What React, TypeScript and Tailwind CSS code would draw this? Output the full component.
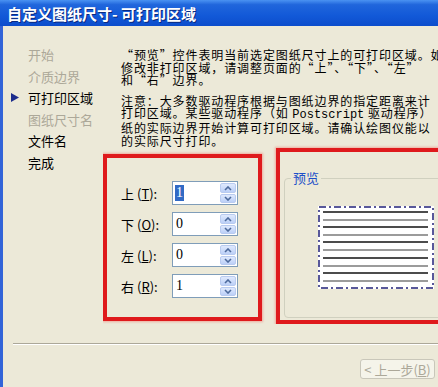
import React from "react";

const cjk = { fontFamily: '"Noto Sans CJK SC", "Liberation Sans", sans-serif' };

const navItems = [
  { label: "开始", state: "off" },
  { label: "介质边界", state: "off" },
  { label: "可打印区域", state: "current" },
  { label: "图纸尺寸名", state: "off" },
  { label: "文件名", state: "on" },
  { label: "完成", state: "on" },
];

const fields = [
  { name: "上", key: "T", value: "1", selected: true },
  { name: "下", key: "O", value: "0" },
  { name: "左", key: "L", value: "0" },
  { name: "右", key: "R", value: "1" },
];

const Spin = () => (
  <div className="flex flex-col w-[17px] h-full gap-[1px] py-[1px] pr-[1px]">
    {[0, 1].map((i) => (
      <div
        key={i}
        className="flex-1 rounded-[2px] border border-[#b9cbf0] bg-[linear-gradient(180deg,#dfe9fd,#bcd0f7)] flex items-center justify-center"
      >
        <svg width="8" height="5" viewBox="0 0 8 5">
          <path
            d={i === 0 ? "M1 4 L4 1 L7 4" : "M1 1 L4 4 L7 1"}
            stroke="#4d6a9c"
            strokeWidth="1.6"
            fill="none"
          />
        </svg>
      </div>
    ))}
  </div>
);

const Paper = () => {
  const ys = [6, 14, 21, 29, 36, 44, 52, 60, 67, 75];
  return (
    <svg width="116" height="83" viewBox="0 0 116 83">
      <rect x="0" y="0" width="116" height="83" fill="#ffffff" />
      <rect
        x="1"
        y="1"
        width="114"
        height="81"
        fill="none"
        stroke="#22227a"
        strokeWidth="1.5"
        strokeDasharray="7 3 2 3"
      />
      {ys.map((y, i) => (
        <line
          key={y}
          x1="5"
          x2="110"
          y1={y}
          y2={y}
          stroke={i % 2 === 0 ? "#111111" : "#7a7a7a"}
          strokeWidth="1.3"
        />
      ))}
    </svg>
  );
};

export default function App() {
  return (
    <div
      className="w-[438px] h-[387px] overflow-hidden bg-[#ece9d8] flex flex-col"
      style={cjk}
    >
      {/* title bar */}
      <div className="h-[26px] shrink-0 flex items-center pl-[7px] bg-[linear-gradient(180deg,#4a92f2_0%,#2066dc_18%,#1259d8_60%,#0c4dcc_100%)]">
        <span className="text-white font-bold text-[15px] leading-none whitespace-nowrap [text-shadow:1px_1px_#0b2a80]">
          自定义图纸尺寸- 可打印区域
        </span>
      </div>

      <div className="flex-1 flex flex-col border-l-[3px] border-[#3264d8] min-h-0">
        <div className="flex">
          {/* wizard steps */}
          <div className="w-[100px] shrink-0 pt-[18px] text-[13px]">
            {navItems.map((n) => (
              <div key={n.label} className="h-[21.5px] flex items-center pl-[8px]">
                <div className="w-[17px] flex items-center">
                  {n.state === "current" && (
                    <svg width="8" height="9" viewBox="0 0 8 9">
                      <path d="M0 0 L8 4.5 L0 9 Z" fill="#1c2c8c" />
                    </svg>
                  )}
                </div>
                <span
                  className={
                    "whitespace-nowrap " +
                    (n.state === "off" ? "text-[#aca899]" : "text-black")
                  }
                >
                  {n.label}
                </span>
              </div>
            ))}
          </div>

          {/* main area */}
          <div className="flex-1 min-w-0 overflow-hidden">
            <div className="pl-[18px] pt-[23px] text-[12px] leading-[12.7px] tracking-[0.9px] text-black whitespace-nowrap">
              <div>“预览”控件表明当前选定图纸尺寸上的可打印区域。如</div>
              <div>修改非打印区域，请调整页面的“上”、“下”、“左”</div>
              <div>和“右”边界。</div>
              <div className="mt-[7.5px]">注意：大多数驱动程序根据与图纸边界的指定距离来计</div>
              <div>
                打印区域。某些驱动程序（如{" "}
                <span className="tracking-normal" style={{ fontFamily: '"Liberation Mono", monospace' }}>
                  Postscript
                </span>{" "}
                驱动程序）
              </div>
              <div>纸的实际边界开始计算可打印区域。请确认绘图仪能以</div>
              <div>的实际尺寸打印。</div>
            </div>

            <div className="flex items-start gap-[14px] mt-[1px]">
              {/* margins */}
              <div className="mt-[6px] w-[159px] h-[167px] shrink-0 border-[4px] border-[#df1a1c] shadow-[0_0_2px_1px_rgba(240,120,110,0.55)] pl-[14px] pt-[23px] flex flex-col gap-[7px]">
                {fields.map((f) => (
                  <div key={f.key} className="flex items-center h-[24px]">
                    <span className="w-[51px] text-[13px] text-black whitespace-nowrap">
                      {f.name}
                      <span className="ml-[3px]">(</span>
                      <span className="underline">{f.key}</span>
                      <span>):</span>
                    </span>
                    <div className="w-[66px] h-[24px] bg-white border border-[#7f9db9] flex">
                      <div className="flex-1 pl-[2px] flex items-center">
                        <span
                          className={
                            "inline-block text-[14px] leading-[16px] px-[1px] " +
                            (f.selected ? "bg-[#316ac5] text-white" : "text-black")
                          }
                          style={{ fontFamily: '"Liberation Serif", serif' }}
                        >
                          {f.value}
                        </span>
                      </div>
                      <Spin />
                    </div>
                  </div>
                ))}
              </div>

              {/* preview */}
              <div className="w-[180px] h-[176px] shrink-0 border-[4px] border-[#df1a1c] shadow-[0_0_2px_1px_rgba(240,120,110,0.55)] pl-[4px] pt-[26px] pb-[2px]">
                <div className="relative h-full border border-[#d0d0bf] rounded-[4px] pl-[33px] pt-[27px]">
                  <span className="absolute -top-[10px] left-[6px] px-[2px] bg-[#ece9d8] text-[13px] leading-[18px] text-[#1c4fc8]">
                    预览
                  </span>
                  <Paper />
                </div>
              </div>
            </div>
          </div>
        </div>

        {/* separator */}
        <div className="ml-[10px] mt-[19px] border-t border-[#aca899] border-b border-b-white" />

        {/* buttons */}
        <div className="flex justify-end pr-[3px] mt-[14px]">
          <div className="w-[75px] h-[20px] rounded-[3px] border border-[#c9c7ba] bg-[#f5f4ea] flex items-center justify-center text-[13px] text-[#aca899] whitespace-nowrap">
            &lt; 上一步(<span className="underline">B</span>)
          </div>
        </div>
      </div>
    </div>
  );
}
